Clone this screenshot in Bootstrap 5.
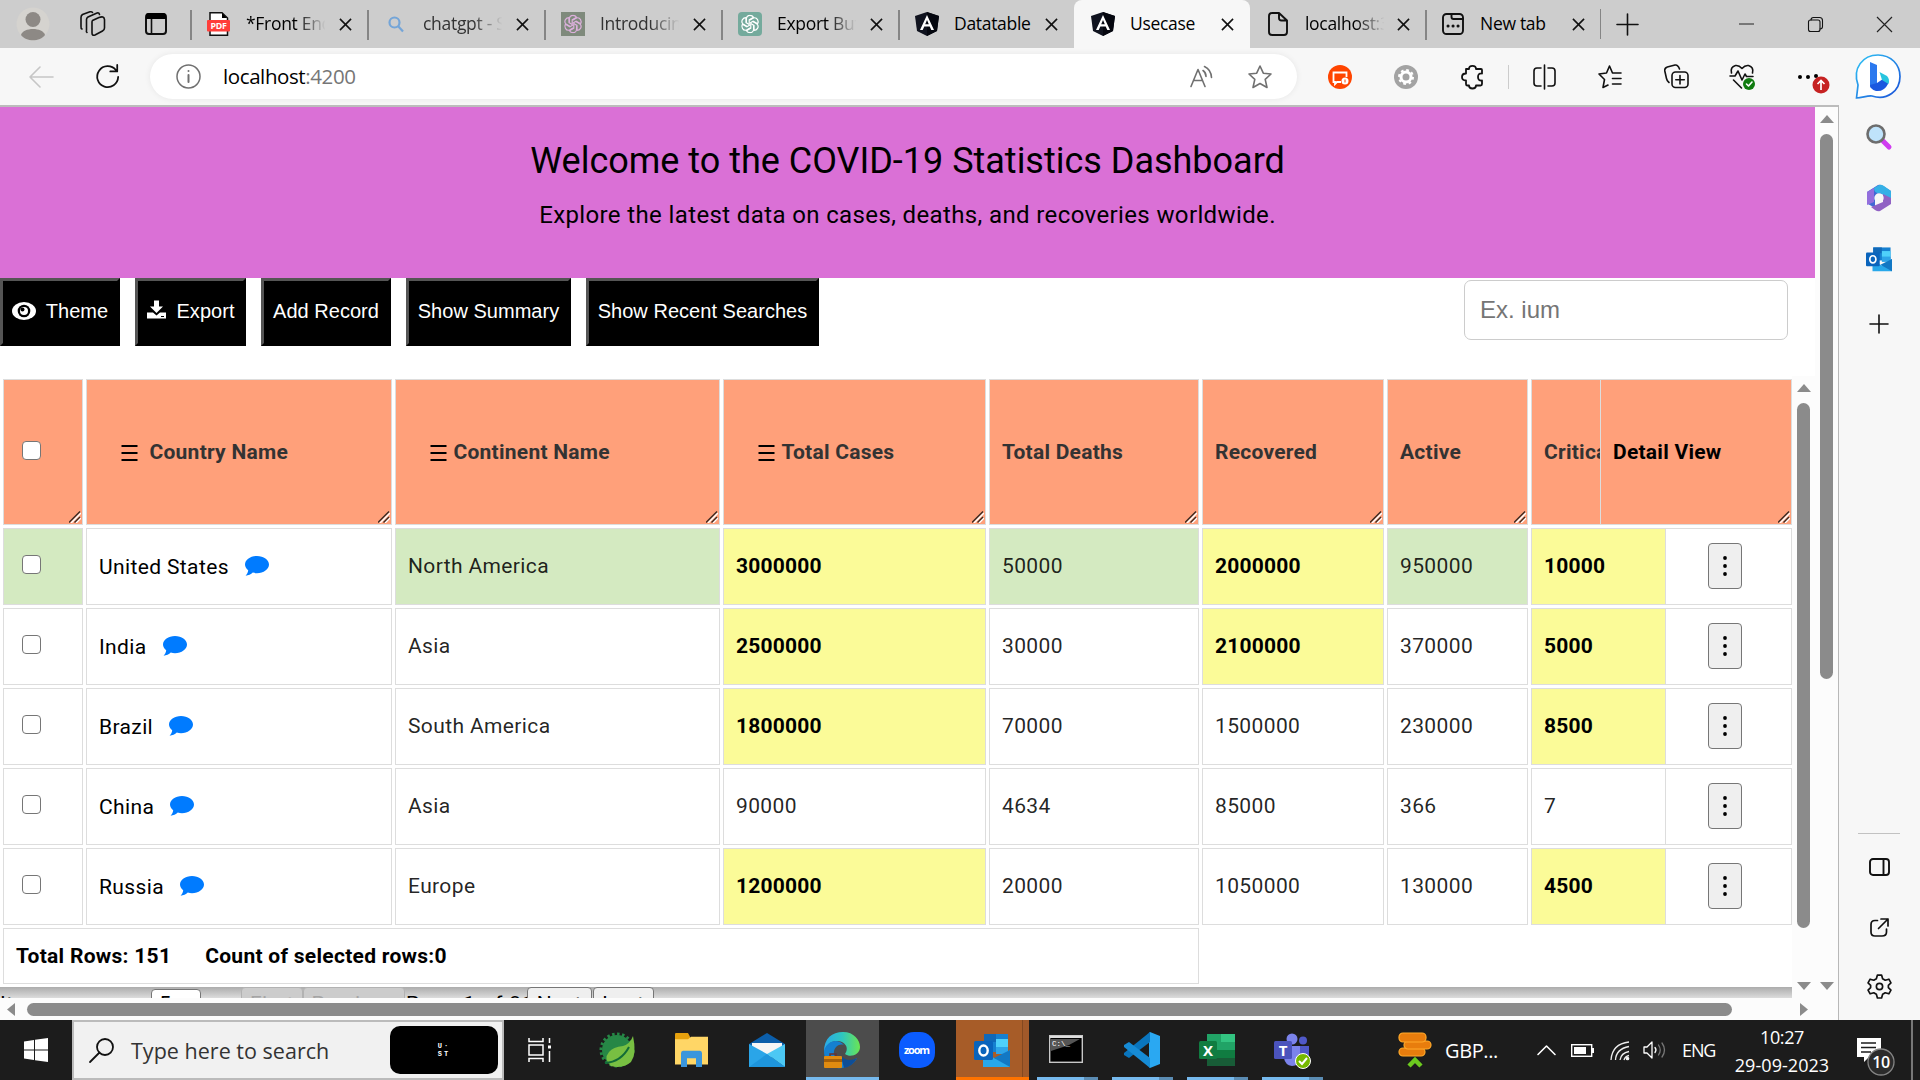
<!DOCTYPE html>
<html lang="en">
<head>
<meta charset="utf-8">
<title>Usecase</title>
<link href="https://cdn.jsdelivr.net/npm/bootstrap@5.3.0/dist/css/bootstrap.min.css" rel="stylesheet">
<script src="https://cdn.jsdelivr.net/npm/bootstrap@5.3.0/dist/js/bootstrap.bundle.min.js"></script>
<style>
  body { width: 1920px; height: 1080px; overflow: hidden; background: #fff; color: #000; }
  svg { display: block; flex: none; overflow: visible; }
  .ui-font { font-family: "Open Sans", "Noto Sans", sans-serif; }
  .ln { fill: none; stroke: #111; stroke-width: 1.6; stroke-linecap: round; stroke-linejoin: round; }
  /* window tabs */
  .tabstrip { height: 48px; background: #cdcdcd; flex: none; }
  .strip-start { width: 190px; }
  .tab { width: 177px; height: 48px; position: relative; font-size: 17.5px; letter-spacing: -.3px; }
  .tab.slim { width: 176px; } .tab.slimmer { width: 175px; }
  .tab::before { content: ""; position: absolute; left: 0; top: 10px; height: 30px; width: 1.5px; background: #858585; }
  .tab.on { background: #f7f7f7; border-radius: 8px 8px 0 0; }
  .tab.on::before, .tab.after-on::before { display: none; }
  .tab .fav { width: 24px; margin-left: 17px; flex: none; }
  .tab .cap { width: 81px; margin-left: 15px; margin-top: -1px; overflow: hidden; white-space: nowrap; flex: none; }
  .tab .fade-end { -webkit-mask-image: linear-gradient(90deg,#000 62%,transparent 98%); }
  .tab .shut { margin-left: 12px; }
  .tab.slim .shut, .tab.slimmer .shut { margin-left: 10px; }
  .strip-end { border-left: 1.5px solid #858585; height: 30px; width: 320px; }
  .win { width: 69px; display: flex; justify-content: center; }
  /* toolbar */
  .toolbar { height: 57px; background: #f7f7f7; flex: none; }
  .pill { width: 1147px; height: 45px; margin-left: 15px; margin-right: 10px; border-radius: 23px; background: #fff; box-shadow: 0 0 6px rgba(0,0,0,.07); font-size: 20.5px; letter-spacing: -.4px; }
  .slot { width: 66px; display: flex; justify-content: center; flex: none; }
  .sep-v { width: 7px; height: 24px; border-left: 1.5px solid #ccc; margin-left: 3px; margin-right: -4px; }
  /* viewport */
  .view { width: 1839px; height: 915px; border-top: 2px solid #bcbcbc; border-right: 1px solid #b8b8b8; overflow: hidden; flex: none; background:#fff; }
  .page { width: 1815px; height: 891px; overflow: hidden; }
  .banner { height: 171px; background: #da70d6; font-family: Roboto, sans-serif; padding-top: 32px; flex: none; }
  .banner h1 { font-size: 36px; line-height: 44px; font-weight: 400; letter-spacing: -.01px; margin: 0 0 18px; }
  .banner p { font-size: 24px; line-height: 28px; letter-spacing: .375px; margin: 0; }
  .tools { height: 98px; flex: none; }
  .blk { height: 68px; border: 3px outset #000; border-color: #555 #000 #000 #555; background: #000; color: #fff; font: 20px "Liberation Sans", sans-serif; padding: 0 8px 2px; display: flex; align-items: center; justify-content: center; white-space: nowrap; letter-spacing: .03px;}
  .find { width: 324px; height: 60px; border: 1.5px solid #ccc; border-radius: 7px; margin: 2px 27px 0 auto; padding: 0 15px; font: 24px "Liberation Sans", sans-serif; color: #777; outline: 0; }
  .find::placeholder { color: #757575; opacity: 1; }
  .sheet { width: 1792px; height: 611px; padding: 3px 0 0 3px; background: #fff; font-family: Roboto, sans-serif; font-size: 21px; letter-spacing: .375px; }
  .line { display: grid; grid-template-columns: 80px 306px 325px 263px 210px 182px 141px 261px; column-gap: 3px; height: 77px; margin-bottom: 3px; }
  .cellx { border: 1.5px solid #ddd; padding-left: 12px; display: flex; align-items: center; color: rgba(0,0,0,.87); white-space: nowrap; overflow: hidden; position: relative; }
  .line.top { height: 146px; }
  .top .cellx { background: #ffa07a; color: #333; font-weight: 700; letter-spacing: .25px; padding-top: 1px; }
  .top .moved { padding-left: 33.5px; }
  .grip { position: absolute; right: 1px; bottom: 1px; }
  .g { background: #d4eac1; }
  .y { background: #fbfb98; font-weight: 700; color: #000; letter-spacing: .2px; }
  .chk { width: 19px; height: 19px; border: 1.5px solid #767676; border-radius: 4px; background: #fff; margin-left: 6px; margin-top: -5px; }
  .last { display: flex; }
  .last .crit { width: 135px; border-right: 0; }
  .last .more { width: 127px; padding-left: 42px; padding-bottom: 2px; }
  .top .last .crit { width: 69px; } .top .last .more { width: 192px; padding-left: 12px; padding-bottom: 0; color: #000; }
  .dots { width: 34px; height: 46px; border: 1.5px solid #767676; border-radius: 4px; background: #efefef; display: flex; align-items: center; justify-content: center; padding: 0; }
  .foot { width: 1196px; height: 56px; border: 1.5px solid #ddd; font-weight: 700; padding-left: 12px; padding-top: 1px; letter-spacing: .28px; }
  .rail { background: #fcfcfc; }
  .thumb { background: #8b8b8b; border-radius: 7px; }
  .inner-rail { width: 23px; padding: 8px 0 8px 5px; height: 622px; }
  .pager { height: 11px; width: 1792px; overflow: hidden; background: linear-gradient(#acacac,#dcdcdc); font: 21px/26px Roboto, sans-serif; letter-spacing: .5px; flex: none; }
  .pager span { white-space: nowrap; }
  .pbtn { height: 30px; border: 1.5px solid #767676; border-radius: 4px; background: #efefef; text-align: center; flex: none; padding-top: 3px; }
  .pbtn.off { background: #ccc; border-color: #b2b2b2; color: #a5a5a5; }
  .outer-rail { width: 23px; height: 891px; padding: 8px 0 8px 5px; }
  .hrail { height: 22px; padding: 5px 30px 4px 7px; }
  .side { width: 81px; background: #f7f7f7; height: 915px; padding-top: 2px; }
  .side > div { height: 60px; display: flex; align-items: center; justify-content: center; padding-right: 1px; }
  /* taskbar */
  .taskbar { height: 60px; background: #1c1c1c; color: #fff; flex: none; }
  .start { width: 72px; }
  .seek { width: 432px; height: 60px; border: 2px solid #bbb; background: #f1f1f1; color: #333; font-size: 21.5px; letter-spacing: .02px; }
  .ust { width: 108px; height: 48px; border-radius: 10px; background: #000; color: #fff; font: 700 7px/8px "Liberation Mono", monospace; letter-spacing: 2px; }
  .app { width: 75px; height: 60px; display: flex; align-items: center; justify-content: center; position: relative; flex: none; }
  .app.run::after { content: ""; position: absolute; left: 8px; bottom: 0; width: 61px; height: 3px; background: linear-gradient(90deg,#76b9ed 47px,#5b8cb3 47px); }
  .app.cur { background: linear-gradient(90deg,transparent 2px,#4c4c4c 2px); }
  .app.cur::after { left: 2px; width: 73px; background: #76b9ed; }
  .app.warn { background: linear-gradient(90deg,transparent 2px,#a75c28 2px,#a75c28 68px,#834820 68px,#834820 69px,#a1592a 69px); }
  .app.warn::after { left: 2px; width: 73px; background: #ff7300; }
  .tray { font-size: 18px; letter-spacing: -.4px; white-space: nowrap; }
  .clock { width: 110px; line-height: 28px; text-align: center; padding-top: 2px; }
  .clock .day { letter-spacing: .05px; }
</style>
</head>
<body>
<svg width="0" height="0" class="position-absolute">
  <defs>
    <linearGradient id="lg1" x2="1" y2="1"><stop stop-color="#30c5f5"/><stop offset="1" stop-color="#1a50d8"/></linearGradient>
    <linearGradient id="lg2" x2="1"><stop stop-color="#2aa9e8"/><stop offset=".5" stop-color="#2ec6c0"/><stop offset="1" stop-color="#6be552"/></linearGradient>
    <symbol id="x" viewBox="0 0 14 14"><path d="M1 1L13 13M13 1L1 13" stroke="#111" stroke-width="1.7"/></symbol>
    <symbol id="ng" viewBox="0 0 24 24"><path d="M12 0L24 4L22 19L12 24L2 19L0 4Z" fill="#10131f"/><path d="M12 0L24 4L22 19L12 24Z" fill="#05070f"/><path d="M12 3L19 18H16.300L14.700 14.500H9.300L7.700 18H5ZM12 8L10.200 12.300H13.800Z" fill="#fff" fill-rule="evenodd"/></symbol>
    <symbol id="gpt" viewBox="-12 -12 24 24"><g fill="none" stroke="currentColor" stroke-width="1.5"><path id="pt" d="M-4.500 -2V-7Q-4 -11 0 -11Q3 -11 4.500 -8.500L-1 -5.200V0"/><use href="#pt" transform="rotate(60)"/><use href="#pt" transform="rotate(120)"/><use href="#pt" transform="rotate(180)"/><use href="#pt" transform="rotate(240)"/><use href="#pt" transform="rotate(300)"/></g></symbol>
    <symbol id="grip" viewBox="0 0 12 12"><path d="M2 12L12 2M7 12L12 7" stroke="#fff" stroke-width="1.500"/><path d="M0 11.500L11 .5M5.500 11.500L11 6" stroke="#3d2a22" stroke-width="1.400"/></symbol>
    <symbol id="bars" viewBox="0 0 16 16"><path d="M0 1H16M0 8H16M0 15H16" stroke="#000" stroke-width="2.200"/></symbol>
    <symbol id="say" viewBox="0 0 24 20"><path d="M12 0C18.600 0 24 3.800 24 8.600S18.600 17.200 12 17.200C10.500 17.200 9.100 17 7.800 16.600C6 18.200 3.400 19.600 .6 19.800C2 18.200 3 16.300 3.200 14.200C1.200 12.700 0 10.800 0 8.600C0 3.800 5.400 0 12 0Z" fill="#007bff"/></symbol>
    <symbol id="gear" viewBox="-12 -12 24 24"><path d="M-2 -11H2L3 -7.500L5.500 -6L9 -7L11 -3.500L8.500 -1V1L11 3.500L9 7L5.500 6L3 7.500L2 11H-2L-3 7.500L-5.500 6L-9 7L-11 3.500L-8.500 1V-1L-11 -3.500L-9 -7L-5.500 -6L-3 -7.500Z"/><circle r="3"/></symbol>
    <symbol id="olk" viewBox="0 0 36 36"><path d="M10 2H34V20H10Z" fill="#1680d0"/><path d="M10 2H22V10H10Z" fill="#1068b8"/><path d="M22 7H34V15H22Z" fill="#4fd0fa"/><path d="M22 15H34V22H22Z" fill="#2ea4e8"/><path d="M9 20L22 27L36 18V35H9Z" fill="#28a8ea"/><path d="M36 18V35L20 26Z" fill="#1278c4"/><rect y="9" width="19" height="19" rx="1.500" fill="#0a64bc"/><ellipse cx="9.500" cy="18.500" rx="4.200" ry="5" fill="none" stroke="#fff" stroke-width="2.400"/></symbol>
  </defs>
</svg>
<div class="d-flex flex-column vh-100">

  <div class="tabstrip ui-font d-flex align-items-center">
    <div class="strip-start d-flex align-items-center">
      <svg width="34" height="34" viewBox="0 0 34 34" style="margin-left:16px"><circle cx="17" cy="17" r="16.500" fill="#d5d3cf"/><circle cx="17" cy="12.500" r="7.500" fill="#8d8985"/><path d="M5 28C7 20 27 20 29 28C24 35 10 35 5 28Z" fill="#8d8985"/></svg>
      <svg width="26" height="26" viewBox="0 0 26 26" class="ln" style="margin-left:30px"><path d="M12.500 9.500L19 6.500Q24 4.500 24.500 8.500V17Q24.500 19 22.500 20L15 24Q12 25 12 22V11Q12 10 12.500 9.500ZM7 21.500Q6 21 6.500 19V8.500Q6.500 7 8 6L17 2Q19 1.500 19.500 3.500M2 18Q.8 17.500 1 15.500V6.500Q1 4.500 2.500 3.500L10 .8Q12 .5 12.500 1.500"/></svg>
      <svg width="22" height="22" viewBox="0 0 22 22" style="margin-left:39px"><rect x="1" y="1" width="20" height="20" rx="3" class="ln" style="stroke-width:2"/><path d="M1 2Q1 0 4 0H18Q21 0 21 3V6H1Z"/><path d="M6.500 6V21" stroke="#111" stroke-width="1.600"/></svg>
    </div>
    <div class="tab d-flex align-items-center">
      <span class="fav"><svg width="23" height="24" viewBox="0 0 23 24"><path d="M3 .8H15L20.500 6V23.200H3Z" fill="#fff" stroke="#111" stroke-width="1.500"/><path d="M15 1V6H20Z"/><rect y="8" width="23" height="11.500" rx="1" fill="#ff3e3a"/><text x="11.500" y="17" font-family="Open Sans" font-weight="700" font-size="8.800" fill="#fff" text-anchor="middle">PDF</text></svg></span>
      <span class="cap fade-end">*Front End</span><svg class="shut" width="13" height="13"><use href="#x"/></svg>
    </div>
    <div class="tab d-flex align-items-center" style="color:#333">
      <span class="fav"><svg width="16" height="16" viewBox="0 0 16 16" style="margin-left:4px" fill="none" stroke="#74a5d8" stroke-width="2.200"><circle cx="6.500" cy="6.500" r="5"/><path d="M10 10L15 15.500"/></svg></span>
      <span class="cap fade-end">chatgpt - S</span><svg class="shut" width="13" height="13"><use href="#x"/></svg>
    </div>
    <div class="tab d-flex align-items-center" style="color:#333">
      <span class="fav"><svg width="24" height="24" viewBox="0 0 24 24" color="#dcb0dc"><path fill="#7f8a7c" d="M0 0H24V24H0Z"/><use href="#gpt" x="2.500" y="2.500" width="19" height="19"/></svg></span>
      <span class="cap fade-end">Introducing</span><svg class="shut" width="13" height="13"><use href="#x"/></svg>
    </div>
    <div class="tab d-flex align-items-center">
      <span class="fav"><svg width="24" height="24" viewBox="0 0 24 24" color="#fff"><rect width="24" height="24" rx="4" fill="#74aa9c"/><use href="#gpt" x="2.500" y="2.500" width="19" height="19"/></svg></span>
      <span class="cap fade-end">Export Butt</span><svg class="shut" width="13" height="13"><use href="#x"/></svg>
    </div>
    <div class="tab slim d-flex align-items-center">
      <span class="fav"><svg width="24" height="24"><use href="#ng"/></svg></span>
      <span class="cap">Datatable</span><svg class="shut" width="13" height="13"><use href="#x"/></svg>
    </div>
    <div class="tab slim on d-flex align-items-center">
      <span class="fav"><svg width="24" height="24"><use href="#ng"/></svg></span>
      <span class="cap">Usecase</span><svg class="shut" width="13" height="13"><use href="#x"/></svg>
    </div>
    <div class="tab slimmer after-on d-flex align-items-center">
      <span class="fav"><svg width="20" height="24" viewBox="0 0 20 24" class="ln" style="stroke-width:1.900;margin-left:1px"><path d="M4 1H11L19 8.500V20Q19 23 16 23H4Q1 23 1 20V4Q1 1 4 1ZM11 1V6Q11 8.500 13.500 8.500H19"/></svg></span>
      <span class="cap fade-end" style="margin-left:14px;margin-right:1px">localhost:3</span><svg class="shut" width="13" height="13"><use href="#x"/></svg>
    </div>
    <div class="tab slimmer d-flex align-items-center">
      <span class="fav"><svg width="22" height="22" viewBox="0 0 22 22" class="ln" style="stroke-width:1.900"><rect x="1" y="1" width="20" height="20" rx="3.500"/><path d="M9.500 1V4Q9.500 6 11.500 6H21"/><path d="M6 13H6.100M11 13H11.100M16 13H16.100" stroke-width="3"/></svg></span>
      <span class="cap" style="margin-left:14px;margin-right:1px">New tab</span><svg class="shut" width="13" height="13"><use href="#x"/></svg>
    </div>
    <div class="strip-end d-flex align-items-center">
      <svg width="21" height="21" viewBox="0 0 21 21" class="ln" style="margin-left:16px;margin-right:74px"><path d="M10.500 0V21M0 10.500H21"/></svg>
      <div class="win"><svg width="15" height="2"><path d="M0 1H15" stroke="#222"/></svg></div>
      <div class="win"><svg width="15" height="15" viewBox="0 0 15 15" class="ln" style="stroke-width:1.100"><rect x=".5" y="3" width="11.500" height="11.500" rx="2"/><path d="M3 3Q3 .5 5.500 .5H11.500Q14.500 .5 14.500 3.500V9.500Q14.500 12 12 12"/></svg></div>
      <div class="win"><svg width="15" height="15" viewBox="0 0 14 14"><path d="M0 0L14 14M14 0L0 14" stroke="#222" stroke-width="1.100"/></svg></div>
    </div>
  </div>

  <div class="toolbar ui-font d-flex align-items-center">
    <svg width="24" height="20" viewBox="0 0 24 20" class="ln" style="stroke:#c6c6c6;margin-left:29px"><path d="M24 10H1M11 0L1 10L11 20"/></svg>
    <svg width="25" height="26" viewBox="0 0 27 26" class="ln" style="stroke-width:1.900;margin-left:42px"><path d="M22.500 5.500A11.300 11.300 0 1 0 25 13M24 0V7H16.500"/></svg>
    <div class="pill d-flex align-items-center" style="margin-left:30px">
      <svg width="25" height="25" viewBox="0 0 25 25" class="ln" style="stroke:#707070;stroke-width:1.500;margin-left:26px"><circle cx="12.500" cy="12.500" r="11.500"/><path d="M12.500 11V18M12.500 7V7.100" stroke-width="2"/></svg>
      <span style="margin-left:22px">localhost<span style="color:#767676">:4200</span></span>
      <svg width="23" height="24" viewBox="0 0 23 21" class="ln ms-auto" style="stroke:#707070;margin-right:35px"><path d="M1 20L8 3L15 20M3.500 14H12.500M13 4Q16 6 16 10M14.500 0Q21 3 21.500 11"/></svg>
      <svg width="24" height="24" viewBox="0 0 24 24" class="ln" style="stroke:#707070;margin-right:25px"><path d="M12 1L15.300 8.200L23 9L17.200 14.300L19 22.500L12 18.500L5 22.500L6.800 14.300L1 9L8.700 8.200Z"/></svg>
    </div>
    <div class="slot"><svg width="24" height="24" viewBox="0 0 24 24"><circle cx="12" cy="12" r="12" fill="#ff4500"/><path d="M13 17H9L7 19V17H5.500V7.500H18.500V12" fill="none" stroke="#fff" stroke-width="1.800"/><circle cx="17" cy="16" r="3.500" fill="#fff"/><path d="M17 14.500V17.500" stroke="#ff4500"/></svg></div>
    <div class="slot"><svg width="24" height="24" viewBox="0 0 24 24"><circle cx="12" cy="12" r="12" fill="#a3a3a3"/><g fill="none" stroke="#fff" stroke-width="3"><circle cx="12" cy="12" r="5"/><circle cx="12" cy="12" r="7" stroke-width="2" stroke-dasharray="2.750 2.750"/></g></svg></div>
    <div class="slot"><svg width="22" height="24" viewBox="0 0 22 24" class="ln" style="stroke-width:1.800"><path d="M5 4H8Q8 .8 11.500 .8T15 4H20Q21 4 21 5V8.500Q17 8 17 12T21 15.500V19Q21 20.500 19.500 20.500H15Q15 23.500 11.500 23.500T8 20.500H6Q5 20.500 5 19V15.500Q1 15.500 1 12T5 8.500Z"/></svg></div>
    <div class="sep-v"></div>
    <div class="slot"><svg width="23" height="24" viewBox="0 0 23 24" class="ln"><path d="M11.500 0V24M8 3H4Q1 3 1 6V18Q1 21 4 21H8M15 3H19Q22 3 22 6V18Q22 21 19 21H15"/></svg></div>
    <div class="slot"><svg width="24" height="24" viewBox="0 0 24 24" class="ln"><path d="M14.500 8L11.500 1L8.500 8L1 9L6.500 14.500L5 22.500L10 20M14.500 8H23M14.500 13.500H23M14.500 19H23"/></svg></div>
    <div class="slot"><svg width="25" height="25" viewBox="0 0 25 25" class="ln"><rect x="8" y="8" width="16" height="15.500" rx="3.500"/><path d="M16 11.500V20M11.800 15.700H20.300M5 18.500Q3 17 2.500 14.500L.8 7Q.3 4 3.300 3L11 1Q14 .5 15.500 5"/></svg></div>
    <div class="slot"><svg width="26" height="26" viewBox="0 0 26 26" class="ln"><path d="M2.500 9Q1 3 6.500 1.500Q10 1 13 4.500Q16 1 19.500 1.500Q25 3 23.500 9M1 12H6L9 7L13 16L16 10L17.500 12.500H24M4.500 16L12.500 24"/><circle cx="20" cy="20" r="6" fill="#107c10" stroke="none"/><path d="M17.500 20L19.500 22L23 18" stroke="#fff"/></svg></div>
    <div class="slot"><svg width="36" height="32" viewBox="0 0 36 32" style="margin-left:9px"><circle cx="5" cy="16" r="2"/><circle cx="13" cy="16" r="2"/><circle cx="21" cy="15" r="2"/><circle cx="26" cy="24" r="8.500" fill="#c62222"/><path d="M26 29V20M22.500 23L26 19.500L29.500 23" fill="none" stroke="#fff" stroke-width="1.700"/></svg></div>
    <div style="width:74px" class="d-flex justify-content-center"><svg width="46" height="46" viewBox="0 0 46 46"><path d="M1.500 44L3 31C-3 14 8 1 23 1C36 1 45 10.500 45 22.500C45 37 32 47 17 42C12 41.500 7 44 1.500 44Z" fill="#fff" stroke="url(#lg1)" stroke-width="1.700"/><path d="M15 8L22 11V30L16 34Q15 33 15 31Z" fill="#2b78ee"/><path d="M15 31L22 29L28 25Q34 24 33 30Q29 38 21 37Q15 35 15 31Z" fill="#1b58df"/><path d="M24.500 18L32 22Q35 25 33.500 30L27 26Z" fill="#27c5df"/></svg></div>
  </div>

  <div class="d-flex">
    <div class="view">
      <div class="d-flex">
        <div class="page d-flex flex-column">
          <div class="banner text-center">
            <h1>Welcome to the COVID-19 Statistics Dashboard</h1>
            <p>Explore the latest data on cases, deaths, and recoveries worldwide.</p>
          </div>
          <div class="tools d-flex align-items-start">
            <div class="d-flex" style="gap:15px">
              <button class="blk" style="width:120px"><svg width="24" height="20" viewBox="0 0 24 20" style="margin-right:10px"><ellipse cx="12" cy="10" rx="12" ry="9" fill="#fff"/><circle cx="12" cy="10" r="6.300"/><circle cx="12" cy="10" r="4" fill="#fff"/><circle cx="10.500" cy="8.500" r="2"/></svg>Theme</button>
              <button class="blk" style="width:111px"><svg width="19" height="19" viewBox="0 0 19 18" style="margin-right:11px;margin-top:-3px"><path d="M7 0H12V6H16L9.500 12.500L3 6H7ZM0 12H6L9.500 15L13 12H19V18H0Z" fill="#fff"/><path d="M14 16H17" stroke="#000"/></svg>Export</button>
              <button class="blk" style="width:130px">Add Record</button>
              <button class="blk" style="width:165px">Show Summary</button>
              <button class="blk" style="width:233px">Show Recent Searches</button>
            </div>
            <input class="find" placeholder="Ex. ium">
          </div>
          <div class="d-flex">
            <div>
              <div class="sheet" id="sheet"></div>
              <div class="pager d-flex">
                <span style="width:151px;padding-top:4px">Items per page:</span>
                <span class="pbtn bg-white text-start" style="width:50px;margin-top:2px;padding-left:7px;padding-top:1px">5</span>
                <span class="pbtn off" style="width:62px;margin-left:40px">First</span><span class="pbtn off" style="width:102px">Previous</span>
                <span style="width:122px;padding-left:1px;padding-top:4px;letter-spacing:.9px">Page 1 of 31</span>
                <span class="pbtn" style="width:65px">Next</span><span class="pbtn" style="width:61px;margin-left:1px">Last</span>
              </div>
            </div>
            <div class="rail inner-rail d-flex flex-column">
              <svg width="14" height="8"><path d="M7 0L14 8H0Z" fill="#8b8b8b"/></svg>
              <div class="thumb" style="width:13px;height:525px;margin-top:11px"></div>
              <svg width="14" height="8" class="mt-auto"><path d="M7 8L14 0H0Z" fill="#8b8b8b"/></svg>
            </div>
          </div>
        </div>
        <div class="rail outer-rail d-flex flex-column">
          <svg width="14" height="8"><path d="M7 0L14 8H0Z" fill="#8b8b8b"/></svg>
          <div class="thumb" style="width:13px;height:545px;margin-top:11px"></div>
          <svg width="14" height="8" class="mt-auto"><path d="M7 8L14 0H0Z" fill="#8b8b8b"/></svg>
        </div>
      </div>
      <div class="rail hrail d-flex align-items-center">
        <svg width="8" height="13"><path d="M8 0V13L0 6.500Z" fill="#8b8b8b"/></svg>
        <div class="thumb" style="width:1705px;height:13px;margin-left:12px"></div>
        <svg width="8" height="13" class="ms-auto"><path d="M0 0V13L8 6.500Z" fill="#8b8b8b"/></svg>
      </div>
    </div>
    <div class="side">
      <div><svg width="26" height="26" viewBox="0 0 26 26"><path d="M17 17L23 23" stroke="#d03cf0" stroke-width="5" stroke-linecap="round"/><circle cx="10" cy="10" r="8.500" fill="#bfe3fb" stroke="#6d6d6d" stroke-width="2.600"/></svg></div>
      <div style="height:62px"><svg width="26" height="28" viewBox="0 0 26 28"><path d="M1 8L12 1Q14 0 17 2L25 7V15L16 10L9 13V24L2 20Q1 19 1 18Z" fill="#4268d4"/><path d="M8 4L13 1Q15 0 18 2L25 7V15L14 9Q8 10 8 4Z" fill="#35b0e6"/><path d="M25 14V20L14 27Q12 28 9 26L5 23L17 18V10Z" fill="#9162c4"/><path d="M1 8L8 4V18L1 21Z" fill="#936fdd"/><circle cx="13" cy="14" r="4.700" fill="#f7f7f7"/></svg></div>
      <div style="height:59px"><svg width="26" height="26"><use href="#olk"/></svg></div>
      <div style="height:71px"><svg width="18" height="18" viewBox="0 0 18 18" class="ln"><path d="M9 0V18M0 9H18"/></svg></div>
      <div style="height:475px" class="align-items-end"><span style="width:42px;height:1.5px;background:#c2c2c2"></span></div>
      <div style="height:66px"><svg width="21" height="18" viewBox="0 0 21 18" class="ln" style="stroke-width:1.900"><rect x="1" y="1" width="19" height="16" rx="3"/><path d="M14.500 1V17"/></svg></div>
      <div style="height:54px"><svg width="19" height="19" viewBox="0 0 19 19" class="ln" style="stroke-width:1.700"><path d="M7.500 2.500H5Q1 2.500 1 6.500V14Q1 18 5 18H12Q16.500 18 16.500 14V11M11 1H18V8M18 1L8.500 10.500"/></svg></div>
      <div style="height:64px"><svg width="25" height="25" class="ln"><use href="#gear"/></svg></div>
    </div>
  </div>

  <div class="taskbar ui-font d-flex align-items-center">
    <div class="start d-flex justify-content-center"><svg width="24" height="24" viewBox="0 0 24 24" fill="#fff"><path d="M0 3.500L10 2V11.500H0ZM11 1.800L24 0V11.500H11ZM0 12.500H10V22L0 20.500ZM11 12.500H24V24L11 22.200Z"/></svg></div>
    <div class="seek d-flex align-items-center">
      <svg width="25" height="25" viewBox="0 0 25 25" class="ln" style="stroke-width:1.800;margin-left:15px"><circle cx="16" cy="9" r="8"/><path d="M10.500 14.500L1 24"/></svg>
      <span style="margin-left:17px;padding-top:2px">Type here to search</span>
      <div class="ust d-flex align-items-center justify-content-center ms-auto" style="margin-right:4px"><span>U·<br>ST</span></div>
    </div>
    <div class="app"><svg width="24" height="24" viewBox="0 0 24 24" fill="none" stroke="#fff" stroke-width="1.500" style="margin-right:3px"><path d="M1 0V3.500H15V0M1 7H15V17H1ZM1 24V20.500H15V24M21.500 0V5M21.500 13V24"/><path d="M20 9H23" stroke-width="3"/></svg></div>
    <div class="app"><svg width="36" height="36" viewBox="-18 -18 36 36"><circle r="15" fill="#268746"/><circle r="16" fill="none" stroke="#268746" stroke-width="3" stroke-dasharray="2.500 2.500"/><path d="M16 -14Q20 4 14 12Q6 19 -6 16Q-14 9 -8 2Q-4 -3 6 -4Q13 -6 16 -14Z" fill="#78bf42"/><path d="M-12 13Q4 12 12 -3" fill="none" stroke="#126b37" stroke-width="2"/></svg></div>
    <div class="app"><svg width="33" height="34" viewBox="0 0 33 27" preserveAspectRatio="none"><path d="M0 1Q0 0 1 0H13L15 3V6H0Z" fill="#e5a00d"/><path d="M0 5H13L16 3H33V25H0Z" fill="#ffd666"/><path d="M6 27V16Q6 14 8 14H25Q27 14 27 16V27H21V20H12V27Z" fill="#3a96dd"/></svg></div>
    <div class="app"><svg width="36" height="34" viewBox="0 0 36 34"><path d="M0 11L18 0L36 11V20H0Z" fill="#0b5eaa"/><path d="M3 10H33V18L18 27L3 18Z" fill="#f5f5f5"/><path d="M0 11L18 21L36 34H0Z" fill="#2aa5e8"/><path d="M36 11L18 21L36 34Z" fill="#4cc8f4"/><path d="M0 34L18 21L36 34Z" fill="#1e95dc"/></svg></div>
    <div class="app run cur"><svg width="36" height="36" viewBox="0 0 36 36"><path d="M0 20C0 6 8 0 19 0C30 0 36 8 36 15C36 23 26 26 21 22C26 15 20 9 13 9C5 9 1 15 0 22Z" fill="url(#lg2)"/><path d="M0 19C2 10 13 5 20 13C14 11 9 17 10 22C12 32 25 31 33 26C29 34 20 37 13 36C4 34 0 28 0 19Z" fill="#1580d0"/><path d="M17 24Q24 31 33 26Q29 34 20 36Z" fill="#0f4e96"/><rect y="24" width="18" height="12" rx="1" fill="#e08b10"/><path d="M0 27H18V30H0Z" fill="#a65f07"/><path d="M6 24V22H12V24" fill="none" stroke="#633" stroke-width="1.500"/></svg></div>
    <div class="app"><svg width="36" height="36" viewBox="0 0 36 36"><rect width="36" height="36" rx="15" fill="#0b5cff"/><text x="18" y="21.500" text-anchor="middle" font-family="Open Sans" font-size="11" font-weight="700" fill="#fff" textLength="26">zoom</text></svg></div>
    <div class="app run warn"><svg width="36" height="36"><use href="#olk"/></svg></div>
    <div class="app run"><svg width="34" height="28" viewBox="0 0 34 28" style="margin-right:2px;margin-top:-2px"><rect x=".7" y=".7" width="32.600" height="26.600" fill="#000" stroke="#c8c8c8" stroke-width="1.400"/><path d="M1 2H33" stroke="#ddd" stroke-width="2"/><path d="M2 4H31L20 10L2 16Z" fill="#555"/><text x="3" y="11" fill="#fff" font-family="Liberation Mono" font-size="7.500">C:\_</text></svg></div>
    <div class="app run"><svg width="36" height="36" viewBox="0 0 36 36"><path d="M26 0L36 4V32L26 36L25 35V1Z" fill="#2aa8f2"/><path d="M26 0V10L5 26L0 23V21Z" fill="#0a75bd"/><path d="M26 36V26L5 10L0 13V15Z" fill="#168bd5"/></svg></div>
    <div class="app run"><svg width="36" height="32" viewBox="0 0 36 32"><path d="M8 0H36V32H8Z" fill="#21a366"/><path d="M22 0H36V8H22Z" fill="#33c481"/><path d="M8 16H36V24H8Z" fill="#107c41"/><path d="M8 24H36V32H8Z" fill="#185c37"/><rect y="7" width="18" height="18" rx="1.500" fill="#107c41"/><text x="9" y="21.500" text-anchor="middle" font-family="Open Sans" font-weight="700" font-size="15" fill="#fff">X</text></svg></div>
    <div class="app run"><svg width="37" height="36" viewBox="0 0 37 36" style="margin-left:2px"><circle cx="18" cy="7" r="5.500" fill="#7b83eb"/><circle cx="29" cy="8.500" r="4" fill="#5059c9"/><path d="M22 14H35V26Q31 32 24 29Z" fill="#5059c9"/><path d="M11 14H26V26Q25 34 18 34Q11 33 10 26Z" fill="#7b83eb"/><rect y="9" width="18" height="18" rx="1.500" fill="#4b53bc"/><text x="9" y="23.500" text-anchor="middle" font-family="Open Sans" font-weight="700" font-size="15" fill="#fff">T</text><circle cx="29" cy="29" r="7.500" fill="#76b900" stroke="#fff"/><path d="M25 29L28 32L33 26" fill="none" stroke="#fff" stroke-width="2"/></svg></div>
    <div class="tray d-flex align-items-center flex-grow-1">
      <svg width="34" height="36" viewBox="0 0 34 36" style="margin-left:69px"><g fill="#e87d0d" stroke="#ffa92a" stroke-width="1.200"><rect x="1" y="16" width="26" height="8" rx="4"/><rect x="6" y="9" width="27" height="8" rx="4"/><rect x="1" y="1" width="27" height="9" rx="4"/></g><path d="M11 34L17 28L23 34" fill="none" stroke="#6ccb1f" stroke-width="4.500"/></svg>
      <span style="margin-left:13px;width:92px;font-size:20px;padding-top:2px">GBP...</span>
      <svg width="19" height="10" viewBox="0 0 19 10" class="ln" style="stroke:#fff"><path d="M1 9.500L9.500 1L18 9.500"/></svg>
      <svg width="23" height="13" viewBox="0 0 23 13" style="margin-left:15px"><rect x=".7" y=".7" width="20" height="11.600" fill="none" stroke="#fff" stroke-width="1.400"/><path d="M3 3H15V10H3ZM21 4H23V9H21Z" fill="#fff"/></svg>
      <svg width="20" height="19" viewBox="0 0 20 19" fill="none" stroke="#eee" stroke-width="1.300" style="margin-left:16px"><path d="M1 19Q2 3 19 1M5.500 19Q6 8 19 5.500M10 19Q11 12 19 10.500M14 19Q15 15.500 19 14.500"/><circle cx="17.500" cy="17.500" r="1.200" fill="#fff"/></svg>
      <svg width="23" height="18" viewBox="0 0 23 18" class="ln" style="stroke:#fff;stroke-width:1.300;margin-left:13px"><path d="M1 6H4L9 1V17L4 12H1ZM12 6.500Q14 9 12 11.500"/><path d="M15.500 4Q19 9 15.500 14M19 2Q24 9 19 16" stroke="#777"/></svg>
      <span style="margin-left:16px;width:45px;letter-spacing:-1.1px">ENG</span>
      <div class="clock">10:27<br><span class="day">29-09-2023</span></div>
      <svg width="40" height="44" viewBox="0 0 40 44" style="margin-left:20px;margin-top:7px"><path d="M0 6H24V25H12L7 30V25H0Z" fill="#fff"/><path d="M4 11H19M4 15.500H19M4 20H14" stroke="#1c1c1c" stroke-width="1.300"/><circle cx="24" cy="30" r="13" fill="#2b2b2b" stroke="#858585" stroke-width="1.300"/><text x="24" y="36" text-anchor="middle" font-family="Open Sans" font-size="16" font-weight="600" fill="#fff">10</text></svg>
      <div style="width:1.5px;height:60px;background:#777;margin-left:14px"></div>
    </div>
  </div>
</div>
<script>
  const grip = '<svg class="grip" width="12" height="12"><use href="#grip"/></svg>';
  const bars = gap => `<svg width="17" height="16" style="margin-right:${gap}px"><use href="#bars"/></svg>`;
  const head = `<div class="line top">
    <div class="cellx"><span class="chk"></span>${grip}</div>
    <div class="cellx moved">${bars(12)}Country Name${grip}</div>
    <div class="cellx moved">${bars(7)}Continent Name${grip}</div>
    <div class="cellx moved">${bars(7)}Total Cases${grip}</div>
    ${['Total Deaths', 'Recovered', 'Active'].map(t => `<div class="cellx">${t}${grip}</div>`).join('')}
    <div class="last"><div class="cellx crit">Critical</div><div class="cellx more">Detail View${grip}</div></div></div>`;
  const rows = [
    ['United States', 'North America', 3000000, 50000, 2000000, 950000, 10000, 'ygygy'],
    ['India', 'Asia', 2500000, 30000, 2100000, 370000, 5000, 'y-y-y'],
    ['Brazil', 'South America', 1800000, 70000, 1500000, 230000, 8500, 'y---y'],
    ['China', 'Asia', 90000, 4634, 85000, 366, 7, '-----'],
    ['Russia', 'Europe', 1200000, 20000, 1050000, 130000, 4500, 'y---y']
  ];
  const body = rows.map((r, i) => {
    const g = i === 0 ? 'g' : '';
    return `<div class="line"><div class="cellx ${g}"><span class="chk"></span></div>
      <div class="cellx" style="color:#000;padding-top:2px">${r[0]}<svg width="24" height="20" style="margin-left:16px;margin-top:-3px"><use href="#say"/></svg></div>
      <div class="cellx ${g}">${r[1]}</div>
      ${[0, 1, 2, 3].map(k => `<div class="cellx ${r[7][k]}">${r[k + 2]}</div>`).join('')}
      <div class="last"><div class="cellx crit ${r[7][4]}">${r[6]}</div>
      <div class="cellx more"><button class="dots"><svg width="4" height="20" viewBox="0 0 4 20"><circle cx="2" cy="2" r="1.900"/><circle cx="2" cy="10" r="1.900"/><circle cx="2" cy="18" r="1.900"/></svg></button></div></div></div>`;
  }).join('');
  document.getElementById('sheet').innerHTML = head + body +
    '<div class="foot d-flex align-items-center"><span>Total Rows: 151</span><span style="margin-left:34px">Count of selected rows:0</span></div>';
</script>
</body>
</html>
